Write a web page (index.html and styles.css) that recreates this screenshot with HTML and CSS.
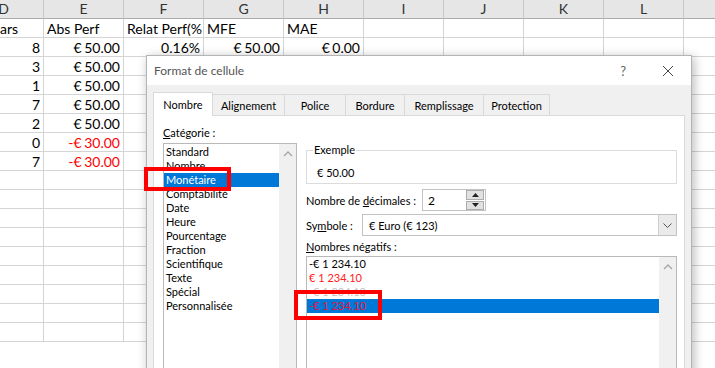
FILE: index.html
```html
<!DOCTYPE html>
<html lang="fr">
<head>
<meta charset="utf-8">
<title>Format de cellule</title>
<link rel="stylesheet" href="styles.css">
</head>
<body>
<div class="sheet">
  <div class="hdr">D</div><div class="hdr">E</div><div class="hdr">F</div><div class="hdr">G</div><div class="hdr">H</div><div class="hdr">I</div><div class="hdr">J</div><div class="hdr">K</div><div class="hdr">L</div><div class="hdr">M</div>

  <div class="c l first">ars</div><div class="c l">Abs Perf</div><div class="c l">Relat Perf(%</div><div class="c l">MFE</div><div class="c l">MAE</div><div class="c"></div><div class="c"></div><div class="c"></div><div class="c"></div><div class="c"></div>

  <div class="c">8</div><div class="c">€ 50.00</div><div class="c">0.16%</div><div class="c">€ 50.00</div><div class="c">€ 0.00</div><div class="c"></div><div class="c"></div><div class="c"></div><div class="c"></div><div class="c"></div>

  <div class="c">3</div><div class="c">€ 50.00</div><div class="c"></div><div class="c"></div><div class="c"></div><div class="c"></div><div class="c"></div><div class="c"></div><div class="c"></div><div class="c"></div>
  <div class="c">1</div><div class="c">€ 50.00</div><div class="c"></div><div class="c"></div><div class="c"></div><div class="c"></div><div class="c"></div><div class="c"></div><div class="c"></div><div class="c"></div>
  <div class="c">7</div><div class="c">€ 50.00</div><div class="c"></div><div class="c"></div><div class="c"></div><div class="c"></div><div class="c"></div><div class="c"></div><div class="c"></div><div class="c"></div>
  <div class="c">2</div><div class="c">€ 50.00</div><div class="c"></div><div class="c"></div><div class="c"></div><div class="c"></div><div class="c"></div><div class="c"></div><div class="c"></div><div class="c"></div>
  <div class="c">0</div><div class="c neg">-€ 30.00</div><div class="c"></div><div class="c"></div><div class="c"></div><div class="c"></div><div class="c"></div><div class="c"></div><div class="c"></div><div class="c"></div>
  <div class="c">7</div><div class="c neg">-€ 30.00</div><div class="c"></div><div class="c"></div><div class="c"></div><div class="c"></div><div class="c"></div><div class="c"></div><div class="c"></div><div class="c"></div>
  <div class="c"></div><div class="c"></div><div class="c"></div><div class="c"></div><div class="c"></div><div class="c"></div><div class="c"></div><div class="c"></div><div class="c"></div><div class="c"></div>
  <div class="c"></div><div class="c"></div><div class="c"></div><div class="c"></div><div class="c"></div><div class="c"></div><div class="c"></div><div class="c"></div><div class="c"></div><div class="c"></div>
  <div class="c"></div><div class="c"></div><div class="c"></div><div class="c"></div><div class="c"></div><div class="c"></div><div class="c"></div><div class="c"></div><div class="c"></div><div class="c"></div>
  <div class="c"></div><div class="c"></div><div class="c"></div><div class="c"></div><div class="c"></div><div class="c"></div><div class="c"></div><div class="c"></div><div class="c"></div><div class="c"></div>
  <div class="c"></div><div class="c"></div><div class="c"></div><div class="c"></div><div class="c"></div><div class="c"></div><div class="c"></div><div class="c"></div><div class="c"></div><div class="c"></div>
  <div class="c"></div><div class="c"></div><div class="c"></div><div class="c"></div><div class="c"></div><div class="c"></div><div class="c"></div><div class="c"></div><div class="c"></div><div class="c"></div>
  <div class="c"></div><div class="c"></div><div class="c"></div><div class="c"></div><div class="c"></div><div class="c"></div><div class="c"></div><div class="c"></div><div class="c"></div><div class="c"></div>
  <div class="c"></div><div class="c"></div><div class="c"></div><div class="c"></div><div class="c"></div><div class="c"></div><div class="c"></div><div class="c"></div><div class="c"></div><div class="c"></div>
  <div class="c"></div><div class="c"></div><div class="c"></div><div class="c"></div><div class="c"></div><div class="c"></div><div class="c"></div><div class="c"></div><div class="c"></div><div class="c"></div>
</div>

<div class="dialog">
  <div class="titlebar">
    <span class="title">Format de cellule</span>
    <span class="help">?</span>
    <svg class="close" width="12" height="12" viewBox="0 0 12 12"><path d="M1 1L11 11M11 1L1 11" stroke="#444" stroke-width="1" fill="none"/></svg>
  </div>
  <div class="body">
    <div class="tabs">
      <div class="tab active">Nombre</div>
      <div class="tab w-align">Alignement</div>
      <div class="tab w-police">Police</div>
      <div class="tab w-bord">Bordure</div>
      <div class="tab w-remp">Remplissage</div>
      <div class="tab w-prot">Protection</div>
    </div>
    <div class="panel">
      <div class="leftcol">
        <div class="lbl"><u>C</u>atégorie :</div>
        <div class="catlist">
          <div class="items">
            <div class="it">Standard</div>
            <div class="it">Nombre</div>
            <div class="it sel">Monétaire</div>
            <div class="it">Comptabilité</div>
            <div class="it">Date</div>
            <div class="it">Heure</div>
            <div class="it">Pourcentage</div>
            <div class="it">Fraction</div>
            <div class="it">Scientifique</div>
            <div class="it">Texte</div>
            <div class="it">Spécial</div>
            <div class="it">Personnalisée</div>
          </div>
          <div class="sbar"><svg width="10" height="6" viewBox="0 0 10 6"><path d="M1 5L5 1L9 5" stroke="#a6a6a6" stroke-width="1.3" fill="none"/></svg></div>
        </div>
      </div>
      <div class="rightcol">
        <div class="group">
          <span class="legend">Exemple</span>
          <div class="sample">€ 50.00</div>
        </div>
        <div class="frow dec">
          <span class="flbl">Nombre de <u>d</u>écimales :</span>
          <div class="spin">
            <span class="spinval">2</span>
            <div class="spinbtns">
              <div class="sb"><svg width="7" height="4" viewBox="0 0 7 4"><path d="M0 4L3.5 0L7 4Z" fill="#222"/></svg></div>
              <div class="sb"><svg width="7" height="4" viewBox="0 0 7 4"><path d="M0 0L3.5 4L7 0Z" fill="#222"/></svg></div>
            </div>
          </div>
        </div>
        <div class="frow sym">
          <span class="flbl">Sy<u>m</u>bole :</span>
          <div class="combo">
            <span class="comboval">€ Euro (€ 123)</span>
            <div class="ddbtn"><svg width="9" height="5" viewBox="0 0 9 5"><path d="M0.5 0.5L4.5 4.5L8.5 0.5" stroke="#555" stroke-width="1" fill="none"/></svg></div>
          </div>
        </div>
        <div class="lbl neglbl"><u>N</u>ombres négatifs :</div>
        <div class="neglist">
          <div class="items">
            <div class="it">-€ 1 234.10</div>
            <div class="it red">€ 1 234.10</div>
            <div class="it ghost">-€ 1 234.10</div>
            <div class="it sel redsel">-€ 1 234.10</div>
          </div>
          <div class="sbar"><svg width="10" height="6" viewBox="0 0 10 6"><path d="M1 5L5 1L9 5" stroke="#a6a6a6" stroke-width="1.3" fill="none"/></svg></div>
        </div>
      </div>
    </div>
  </div>
</div>

<div class="mark mark-cat"></div>
<div class="mark mark-neg"></div>
</body>
</html>
```

FILE: styles.css
```css
html, body {
  margin: 0;
  padding: 0;
  width: 715px;
  height: 368px;
  overflow: hidden;
  background: #fff;
}
body {
  position: relative;
  font-family: "Lato", "Liberation Sans", sans-serif;
}

/* ---------- spreadsheet ---------- */
.sheet {
  display: grid;
  grid-template-columns: repeat(10, 80px);
  grid-auto-rows: 19px;
  margin-left: -36px;
  font-size: 14px;
  color: #000;
}
.hdr {
  background: #e6e6e6;
  border-right: 1px solid #c8c8c8;
  border-bottom: 1px solid #ababab;
  box-sizing: border-box;
  text-align: center;
  line-height: 18px;
  color: #333;
}
.c {
  box-sizing: border-box;
  border-right: 1px solid #d4d4d4;
  border-bottom: 1px solid #d4d4d4;
  text-align: right;
  padding: 0 3px;
  line-height: 19px;
  white-space: nowrap;
  overflow: hidden;
  word-spacing: -1px;
}
.c.l { text-align: left; word-spacing: 0; }
.c.first { padding-left: 36px; }
.c.neg { color: #ff0000; }

/* ---------- dialog ---------- */
.dialog {
  position: absolute;
  left: 146px;
  top: 55px;
  width: 546px;
  height: 340px;
  box-sizing: border-box;
  border: 1px solid #b4b4b4;
  background: #f0f0f0;
  box-shadow: 2px 2px 10px rgba(0, 0, 0, 0.28);
  font-family: "Lato", "Liberation Sans", sans-serif;
  font-size: 11px;
  color: #000;
  display: flex;
  flex-direction: column;
}
.titlebar {
  height: 29px;
  background: #fff;
  display: flex;
  align-items: center;
  padding-left: 7px;
  padding-right: 17px;
}
.title {
  flex: 1;
  color: #555;
  font-size: 12px;
}
.help {
  color: #666;
  font-size: 13px;
  margin-right: 36px;
}
.close { display: block; }

.body {
  flex: 1;
  padding: 7px 7px 0 6px;
  display: flex;
  flex-direction: column;
}
.tabs {
  display: flex;
  align-items: flex-end;
  height: 23px;
}
.tab {
  box-sizing: border-box;
  height: 21px;
  border: 1px solid #d9d9d9;
  border-bottom: none;
  border-left: none;
  background: #f0f0f0;
  display: flex;
  align-items: center;
  justify-content: center;
  color: #000;
}
.tab.active {
  height: 24px;
  width: 60px;
  background: #fff;
  border-left: 1px solid #d9d9d9;
  margin-bottom: -1px;
  position: relative;
  z-index: 1;
}
.w-align { width: 72px; }
.w-police { width: 61px; }
.w-bord { width: 59px; }
.w-remp { width: 79px; }
.w-prot { width: 66px; }

.panel {
  flex: 1;
  background: #fff;
  border: 1px solid #d9d9d9;
  width: 532px;
  box-sizing: border-box;
  display: flex;
  padding: 10px 0 0 9px;
  gap: 9px;
}
.leftcol {
  width: 134px;
  display: flex;
  flex-direction: column;
}
.lbl {
  height: 17px;
  line-height: 14px;
}
.catlist {
  height: 240px;
  border: 1px solid #b9b9b9;
  display: flex;
  box-sizing: border-box;
}
.items {
  flex: 1;
  display: flex;
  flex-direction: column;
}
.it {
  height: 14px;
  line-height: 14px;
  padding-left: 2px;
  white-space: nowrap;
  color: #000;
}
.catlist .items { padding-top: 1px; }
.it.sel {
  background: #0078d7;
  color: #fff;
}
.sbar {
  width: 17px;
  background: #f0f0f0;
  display: flex;
  justify-content: center;
  padding-top: 7px;
  box-sizing: border-box;
}
.sbar svg { display: block; }

.rightcol {
  width: 371px;
  display: flex;
  flex-direction: column;
  padding-top: 24px;
}
.group {
  height: 34px;
  border: 1px solid #dcdcdc;
  box-sizing: border-box;
  position: relative;
  padding: 14px 0 0 10px;
}
.legend {
  position: absolute;
  left: 6px;
  top: -9px;
  background: #fff;
  padding: 0 1px;
  line-height: 16px;
}
.sample { line-height: 16px; }

.frow {
  display: flex;
  align-items: center;
}
.dec {
  margin-top: 5px;
  height: 22px;
}
.flbl { white-space: nowrap; }
.dec .flbl { width: 116px; }
.spin {
  width: 64px;
  height: 22px;
  box-sizing: border-box;
  border: 1px solid #c3c3c3;
  display: flex;
  align-items: center;
}
.spinval {
  flex: 1;
  padding-left: 5px;
  font-size: 12px;
}
.spinbtns {
  width: 18px;
  height: 20px;
  display: flex;
  flex-direction: column;
  gap: 1px;
  margin-right: 1px;
}
.sb {
  flex: 1;
  background: #e1e1e1;
  border: 1px solid #adadad;
  display: flex;
  align-items: center;
  justify-content: center;
}
.sb svg { display: block; }

.sym {
  margin-top: 3px;
  height: 22px;
}
.sym .flbl { width: 56px; }
.combo {
  flex: 1;
  height: 22px;
  box-sizing: border-box;
  border: 1px solid #c3c3c3;
  display: flex;
  align-items: center;
}
.comboval {
  flex: 1;
  padding-left: 6px;
}
.ddbtn {
  width: 17px;
  height: 20px;
  background: #eaeaea;
  border-left: 1px solid #cfcfcf;
  display: flex;
  align-items: center;
  justify-content: center;
}
.ddbtn svg { display: block; }

.neglbl {
  margin-top: 4px;
  height: 16px;
}
.neglist {
  height: 120px;
  border: 1px solid #b9b9b9;
  box-sizing: border-box;
  display: flex;
}
.it.red { color: #ff2020; }
.it.ghost { color: #c4c4c4; }
.it.redsel { color: #e0143c; }

/* ---------- annotations ---------- */
.mark {
  position: absolute;
  border: 4px solid #ff0000;
  box-sizing: border-box;
}
.mark-cat {
  left: 144px;
  top: 167px;
  width: 87px;
  height: 24px;
}
.mark-neg {
  left: 294px;
  top: 290px;
  width: 88px;
  height: 30px;
}
```
